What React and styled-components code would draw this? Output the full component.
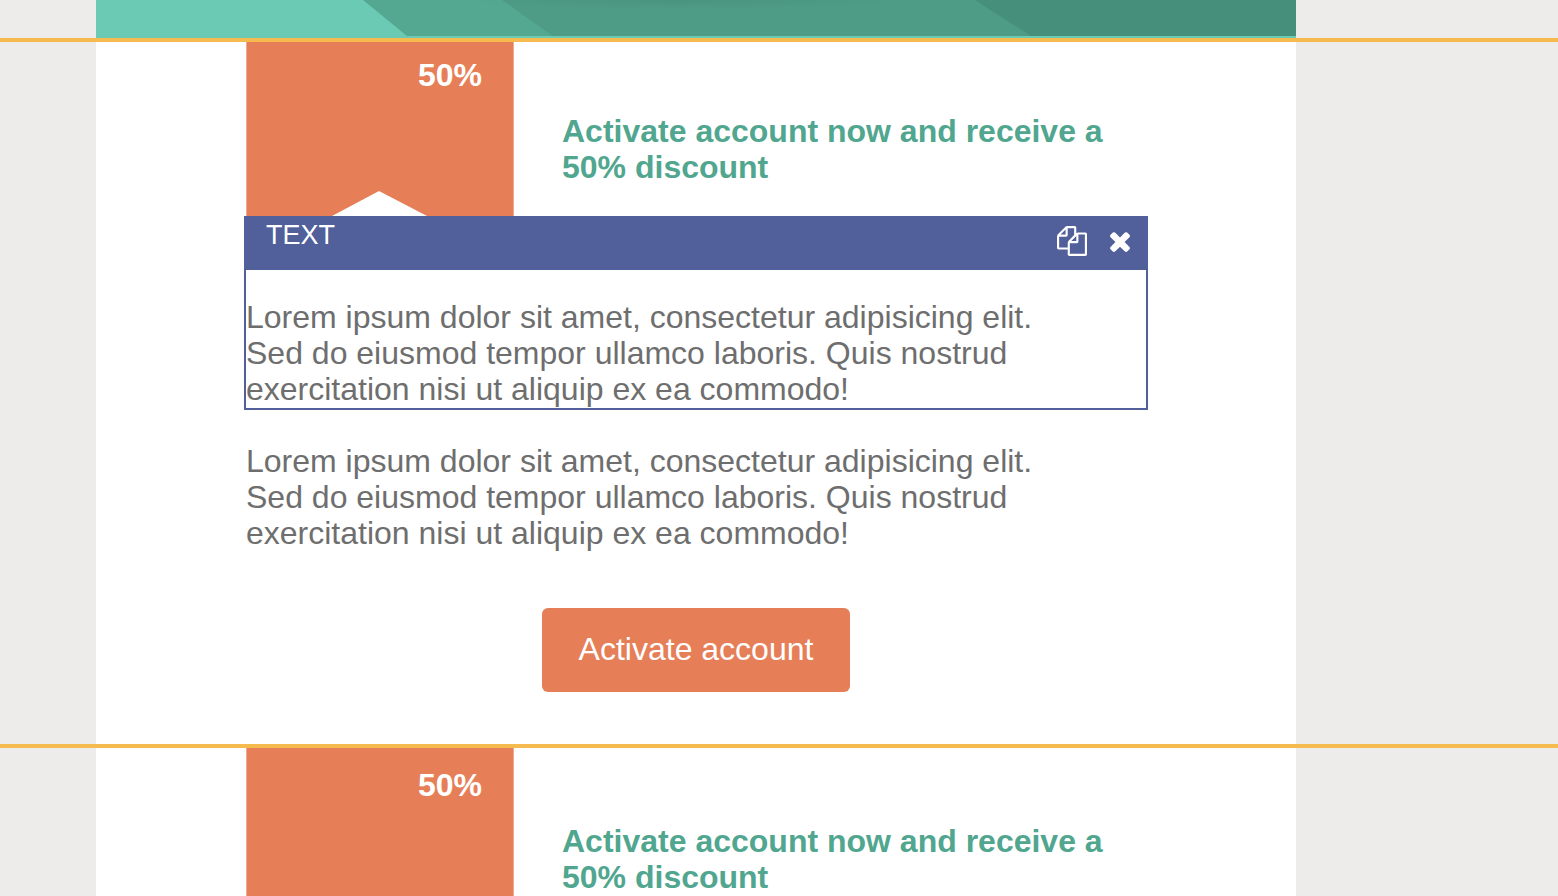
import React from "react";
import styled, { createGlobalStyle } from "styled-components";

const GlobalStyle = createGlobalStyle`
  *, *::before, *::after { box-sizing: border-box; }
  body {
    margin: 0;
    background: #edecea;
    font-family: "Liberation Sans", Arial, sans-serif;
    font-size: 32px;
    line-height: 36px;
    color: #6e6e6e;
  }
`;

const Canvas = styled.main`
  height: 100vh;
  overflow: hidden;
`;

const Row = styled.section`
  padding-left: 96px;
  border-top: ${(p) => (p.$divided ? "4px solid #f5bb4f" : "0")};
`;

const Sheet = styled.div`
  max-width: 1200px;
  padding: 0 150px ${(p) => p.$bottom || 0}px;
  background: #fff;
`;

const Banner = styled.div`
  max-width: 1200px;
  height: 38px;
  background: #6acab3;

  svg {
    display: block;
    width: 100%;
    height: 36px;
  }
`;

const Offer = styled.div`
  display: flex;
  align-items: flex-start;
  gap: 48px;
`;

const Ribbon = styled.div`
  flex: none;
  width: 268px;
  height: ${(p) => 159 + p.$inset}px;
  padding: ${(p) => p.$inset}px 31px 0 0;
  border: solid #efab92;
  border-width: 0 1px;
  background: #e67f58;
  color: #fff;
  font-weight: bold;
  text-align: right;
  clip-path: polygon(
    0 0, 100% 0, 100% 100%, 181px 100%,
    133px calc(100% - 25px), 86px 100%, 0 100%
  );
`;

const OfferTitle = styled.h2`
  flex: 1;
  margin: 0;
  padding-top: ${(p) => 56 + p.$inset}px;
  font-size: 32px;
  line-height: 36px;
  font-weight: bold;
  color: #50a68e;
`;

const Module = styled.div`
  margin: 0 -2px;
  border: 2px solid #515f9a;
`;

const ModuleBar = styled.div`
  display: flex;
  justify-content: space-between;
  align-items: flex-start;
  height: 52px;
  padding: 2px 11px 0 20px;
  background: #515f9a;
  color: #fff;
  font-size: 27px;
  line-height: 30px;
`;

const ModuleActions = styled.div`
  display: flex;
  gap: 18px;
  padding-top: 6px;
`;

const IconButton = styled.button`
  width: 30px;
  height: 30px;
  padding: 0;
  border: 0;
  background: none;
  color: inherit;
  cursor: pointer;

  svg {
    display: block;
    width: 30px;
    height: 30px;
    fill: currentColor;
  }
`;

const Paragraph = styled.p`
  margin: 0;
  padding: ${(p) => p.$top}px 0 1px;
`;

const ButtonRow = styled.div`
  display: flex;
  justify-content: center;
  padding-top: 56px;
`;

const ActionButton = styled.button`
  padding: 23px 37px 25px;
  border: 0;
  border-radius: 6px;
  background: #e67e58;
  color: #fff;
  font: inherit;
  cursor: pointer;
`;

function OfferHeader({ inset }) {
  return (
    <Offer>
      <Ribbon $inset={inset}>50%</Ribbon>
      <OfferTitle $inset={inset}>
        Activate account now and receive a 50% discount
      </OfferTitle>
    </Offer>
  );
}

function Copy({ top }) {
  return (
    <Paragraph $top={top}>
      Lorem ipsum dolor sit amet, consectetur adipisicing elit.
      <br />
      Sed do eiusmod tempor ullamco laboris. Quis nostrud
      <br />
      exercitation nisi ut aliquip ex ea commodo!
    </Paragraph>
  );
}

function BannerArt() {
  return (
    <svg viewBox="0 0 1200 36" preserveAspectRatio="none" aria-hidden="true">
      <defs>
        <radialGradient id="shade" cx="0.5" cy="0.5" r="0.5">
          <stop offset="0" stopColor="#2f6f5e" stopOpacity="0.16" />
          <stop offset="1" stopColor="#2f6f5e" stopOpacity="0" />
        </radialGradient>
      </defs>
      <path d="M267 0H1200V36H311Z" fill="#54a891" />
      <path d="M406 0H1200V36H457Z" fill="#4e9b86" />
      <path d="M879 0H1200V36H935Z" fill="#46907b" />
      <ellipse cx="584" cy="0" rx="230" ry="9" fill="url(#shade)" />
    </svg>
  );
}

export default function App() {
  return (
    <>
      <GlobalStyle />
      <Canvas>
        <Row>
          <Banner>
            <BannerArt />
          </Banner>
        </Row>

        <Row $divided>
          <Sheet $bottom={52}>
            <OfferHeader inset={15} />
            <Module>
              <ModuleBar>
                <span>TEXT</span>
                <ModuleActions>
                  <IconButton type="button" aria-label="Duplicate">
                    <svg viewBox="0 0 1792 1792">
                      <path d="M1696 384q40 0 68 28t28 68v1216q0 40-28 68t-68 28h-960q-40 0-68-28t-28-68v-288h-544q-40 0-68-28t-28-68v-672q0-40 20-88t48-76l408-408q28-28 76-48t88-20h416q40 0 68 28t28 68v328q68-40 128-40h416zm-544 213l-299 299h299v-299zm-640-384l-299 299h299v-299zm196 647l316-316v-416h-384v416q0 40-28 68t-68 28h-416v640h512v-256q0-40 20-88t48-76zm956 804v-1152h-384v416q0 40-28 68t-68 28h-416v640h896z" />
                    </svg>
                  </IconButton>
                  <IconButton type="button" aria-label="Remove">
                    <svg viewBox="0 0 1792 1792">
                      <path d="M1490 1322q0 40-28 68l-136 136q-28 28-68 28t-68-28l-294-294-294 294q-28 28-68 28t-68-28l-136-136q-28-28-28-68t28-68l294-294-294-294q-28-28-28-68t28-68l136-136q28-28 68-28t68 28l294 294 294-294q28-28 68-28t68 28l136 136q28 28 28 68t-28 68l-294 294 294 294q28 28 28 68z" />
                    </svg>
                  </IconButton>
                </ModuleActions>
              </ModuleBar>
              <Copy top={29} />
            </Module>
            <Copy top={33} />
            <ButtonRow>
              <ActionButton type="button">Activate account</ActionButton>
            </ButtonRow>
          </Sheet>
        </Row>

        <Row $divided>
          <Sheet>
            <OfferHeader inset={19} />
          </Sheet>
        </Row>
      </Canvas>
    </>
  );
}
